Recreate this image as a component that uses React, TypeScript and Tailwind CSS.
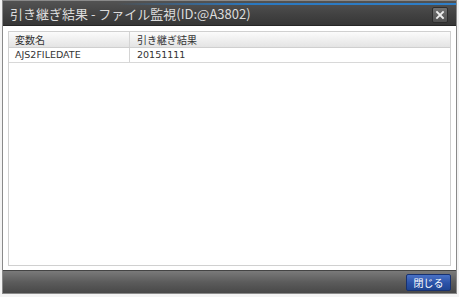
import React from "react";

export default function App() {
  const jp = { fontFamily: '"Noto Sans CJK JP", "Noto Sans", sans-serif' };
  return (
    <div className="w-[459px] h-[297px] bg-[#f4f4f4] overflow-hidden" style={jp}>
      <div className="mx-[2px] flex flex-col h-[294px] bg-white border border-[#8a8a8a]">
        {/* title bar */}
        <div className="relative h-[25px] shrink-0 flex items-center justify-between pl-[7px] pr-[8px] bg-[linear-gradient(#535353,#424242_55%,#363636)] border-b border-[#262626]">
          <div className="absolute left-0 right-0 top-[2px] h-[2px] bg-[linear-gradient(90deg,rgba(40,110,180,0)_25%,#2a78c0_55%,#2f7fc8)]" />
          <span className="text-[13px] leading-none text-[#dcdcdc] mt-[1px]">
            引き継ぎ結果 - ファイル監視(ID:@A3802)
          </span>
          <div className="w-[16px] h-[16px] mt-[3px] flex items-center justify-center bg-[linear-gradient(#727272,#515151)] border border-[#2e2e2e] rounded-[2px]">
            <svg width="10" height="10" viewBox="0 0 10 10">
              <path d="M2 2 L8 8 M8 2 L2 8" stroke="#efefef" strokeWidth="1.8" strokeLinecap="square" />
            </svg>
          </div>
        </div>
        {/* body */}
        <div className="flex-1 flex flex-col px-[5px] pt-[5px] pb-[4px]">
          <div className="flex-1 border border-[#d0d0d0] bg-white flex flex-col">
            <div className="flex h-[16px] bg-[linear-gradient(#fbfbfb,#e4e4e4)] border-b border-[#cfcfcf] text-[10px] text-[#333] items-center">
              <div className="w-[121px] pl-[6px] border-r border-[#d4d4d4] h-full flex items-center">変数名</div>
              <div className="pl-[7px]">引き継ぎ結果</div>
            </div>
            <div className="flex h-[15px] border-b border-[#d8d8d8] text-[#333] items-center" style={{ fontFamily: '"DejaVu Sans", "Noto Sans", sans-serif' }}>
              <div className="w-[121px] pl-[6px] border-r border-[#d4d4d4] h-full flex items-center text-[9.5px]">AJS2FILEDATE</div>
              <div className="pl-[7px] text-[9.5px]">20151111</div>
            </div>
          </div>
        </div>
        {/* footer */}
        <div className="h-[23px] shrink-0 flex items-center justify-end pr-[5px] bg-[linear-gradient(#7a7a7a,#5c5c5c_50%,#484848)] border-t border-[#444]">
          <div className="w-[45px] h-[17px] flex items-center justify-center text-[10px] text-white bg-[linear-gradient(#4a72c6,#2b52a8_55%,#1f4592)] border border-[#173170] rounded-[2px]">
            閉じる
          </div>
        </div>
      </div>
    </div>
  );
}
